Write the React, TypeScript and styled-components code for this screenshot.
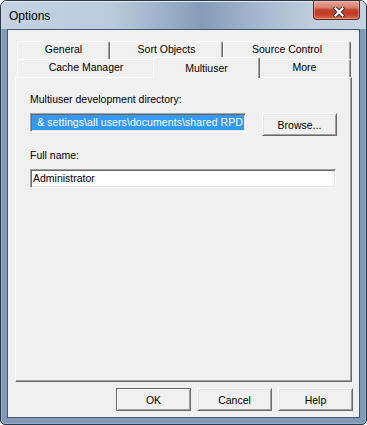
import styled, { createGlobalStyle } from "styled-components";

const Global = createGlobalStyle`
  html, body {
    margin: 0;
    padding: 0;
    background: #ffffff;
  }
  body {
    font-family: "Liberation Sans", Arial, sans-serif;
  }
`;

const Window = styled.div`
  width: 367px;
  height: 425px;
  box-sizing: border-box;
  border: 1px solid #2b3846;
  border-radius: 7px 7px 5px 5px;
  overflow: hidden;
  display: flex;
  flex-direction: column;
  background: #8199b6;
  box-shadow: inset 0 0 0 1px #97adc6;
`;

const TitleBar = styled.div`
  height: 28px;
  flex: none;
  display: flex;
  justify-content: space-between;
  align-items: flex-start;
  padding-left: 8px;
  background: linear-gradient(
    90deg,
    #c4d2e1 0%,
    #bccbdc 30%,
    #9bb0c8 45%,
    #849cb9 55%,
    #a0b4cb 68%,
    #bfcddd 85%,
    #c6d3e1 100%
  );
  box-shadow: inset 0 1px 0 #e3eaf2;
`;

const Title = styled.div`
  font-size: 12px;
  line-height: 14px;
  padding-top: 8px;
  color: #000;
`;

const CloseButton = styled.div`
  width: 47px;
  height: 19px;
  box-sizing: border-box;
  margin-right: 6px;
  border: 1px solid #5e2b25;
  border-top: none;
  border-radius: 0 0 4px 4px;
  background: linear-gradient(
    180deg,
    #e7a799 0%,
    #d9826f 35%,
    #c4412a 50%,
    #c23a22 70%,
    #d96b4f 100%
  );
  box-shadow: inset 0 0 0 1px rgba(255, 200, 190, 0.45);
  display: flex;
  align-items: center;
  justify-content: center;
  padding: 3px 0 0 4px;
`;

const Frame = styled.div`
  flex: 1;
  display: flex;
  padding: 0 6px 6px;
`;

const Client = styled.div`
  flex: 1;
  display: flex;
  flex-direction: column;
  border: 1px solid #45576c;
  background: #f0f0f0;
  padding: 11px 6px 6px 7px;
  font-size: 10.5px;
  color: #000;
`;

const TabArea = styled.div`
  display: flex;
  flex-direction: column;
  margin-right: 1px;
`;

const TabRow = styled.div`
  display: flex;
  height: 18px;
  align-items: flex-start;
  margin-left: 2px;
`;

const Tab = styled.div<{ $w: number; $active?: boolean }>`
  width: ${(p) => (p.$active ? p.$w + 4 : p.$w)}px;
  height: ${(p) => (p.$active ? 21 : 18)}px;
  margin: ${(p) => (p.$active ? "-2px -2px 0" : "0")};
  position: relative;
  z-index: ${(p) => (p.$active ? 2 : 1)};
  box-sizing: border-box;
  flex: none;
  background: #f0f0f0;
  border-top: 1px solid #ffffff;
  border-left: 1px solid #ffffff;
  border-right: 1px solid #696969;
  border-radius: 2px 2px 0 0;
  box-shadow: inset -1px 0 0 #a0a0a0;
  text-align: center;
  line-height: 13px;
  padding-top: ${(p) => (p.$active ? 4 : 1)}px;
  white-space: nowrap;
`;

const Panel = styled.div`
  height: 305px;
  box-sizing: border-box;
  margin-right: 1px;
  border-top: 1px solid #ffffff;
  border-left: 1px solid #ffffff;
  border-right: 1px solid #696969;
  border-bottom: 1px solid #696969;
  box-shadow: inset -1px -1px 0 #a0a0a0;
  padding: 15px 14px 0 14px;
  display: flex;
  flex-direction: column;
`;

const Label = styled.div<{ $gap?: number }>`
  line-height: 13px;
  margin-top: ${(p) => p.$gap ?? 0}px;
  margin-bottom: 7px;
`;

const FieldRow = styled.div`
  display: flex;
  align-items: flex-start;
  gap: 16px;
`;

const Field = styled.div<{ $w: number }>`
  width: ${(p) => p.$w}px;
  height: 19px;
  box-sizing: border-box;
  background: #ffffff;
  border-top: 1px solid #a0a0a0;
  border-left: 1px solid #a0a0a0;
  border-right: 1px solid #ffffff;
  border-bottom: 1px solid #ffffff;
  box-shadow: inset 1px 1px 0 #696969, inset -1px -1px 0 #e3e3e3;
  padding: 1px 1px 1px 2px;
  line-height: 15px;
  white-space: nowrap;
  overflow: hidden;
`;

const Selection = styled.div`
  display: flex;
  justify-content: flex-end;
  height: 15px;
  margin-left: -1px;
  background: #3399ff;
  color: #ffffff;
  padding-right: 1px;
  letter-spacing: 0.08px;
  overflow: hidden;
  white-space: nowrap;
`;

const Button = styled.button<{ $default?: boolean }>`
  width: 75px;
  height: 23px;
  box-sizing: border-box;
  padding: 0;
  margin: 0;
  font-family: "Liberation Sans", Arial, sans-serif;
  font-size: 10.5px;
  color: #000;
  background: #f0f0f0;
  border: 1px solid;
  border-color: ${(p) =>
    p.$default ? "#696969" : "#ffffff #696969 #696969 #ffffff"};
  box-shadow: ${(p) =>
    p.$default
      ? "inset 1px 1px 0 #ffffff, inset -1px -1px 0 #a0a0a0"
      : "inset 1px 1px 0 #e3e3e3, inset -1px -1px 0 #a0a0a0"};
`;

const ButtonBar = styled.div`
  display: flex;
  justify-content: flex-end;
  gap: 6px;
  margin-top: 6px;
`;

const rowOne = [
  { label: "General", w: 93 },
  { label: "Sort Objects", w: 113 },
  { label: "Source Control", w: 128 },
];

const rowTwo = [
  { label: "Cache Manager", w: 138 },
  { label: "Multiuser", w: 103, active: true },
  { label: "More", w: 93 },
];

function CloseGlyph() {
  return (
    <svg width="12" height="10" viewBox="0 0 12 10">
      <path
        d="M2.5 1.5 L9.5 8.5 M9.5 1.5 L2.5 8.5"
        stroke="#3b3b3b"
        strokeWidth="4"
        strokeLinecap="square"
        fill="none"
      />
      <path
        d="M2.5 1.5 L9.5 8.5 M9.5 1.5 L2.5 8.5"
        stroke="#ffffff"
        strokeWidth="2"
        strokeLinecap="square"
        fill="none"
      />
    </svg>
  );
}

export default function App() {
  return (
    <>
      <Global />
      <Window>
        <TitleBar>
          <Title>Options</Title>
          <CloseButton>
            <CloseGlyph />
          </CloseButton>
        </TitleBar>
        <Frame>
          <Client>
            <TabArea>
              <TabRow>
                {rowOne.map((t) => (
                  <Tab key={t.label} $w={t.w}>
                    {t.label}
                  </Tab>
                ))}
              </TabRow>
              <TabRow>
                {rowTwo.map((t) => (
                  <Tab key={t.label} $w={t.w} $active={t.active}>
                    {t.label}
                  </Tab>
                ))}
              </TabRow>
            </TabArea>
            <Panel>
              <Label>Multiuser development directory:</Label>
              <FieldRow>
                <Field $w={216}>
                  <Selection>
                    <span>&amp; settings\all users\documents\shared RPD</span>
                  </Selection>
                </Field>
                <Button>Browse...</Button>
              </FieldRow>
              <Label $gap={13}>Full name:</Label>
              <Field $w={306}>Administrator</Field>
            </Panel>
            <ButtonBar>
              <Button $default>OK</Button>
              <Button>Cancel</Button>
              <Button>Help</Button>
            </ButtonBar>
          </Client>
        </Frame>
      </Window>
    </>
  );
}
